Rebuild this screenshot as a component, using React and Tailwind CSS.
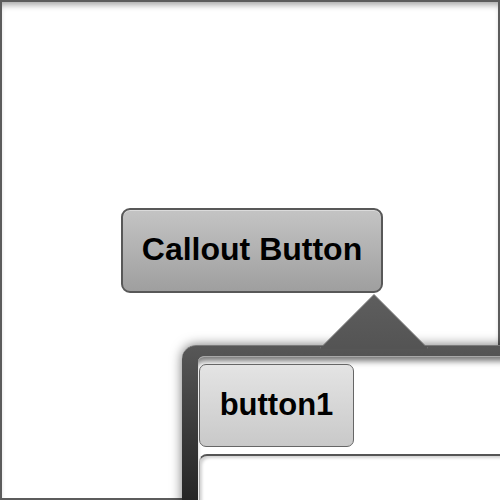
import React from 'react'

// Callout button with a popup panel hanging off its bottom-right corner
const Arrow = () => (
  <svg width="108" height="56" viewBox="0 0 108 56" className="block">
    <defs>
      <linearGradient id="arrowFill" x1="0" y1="0" x2="0" y2="1">
        <stop offset="0" stopColor="#5e5e5e" />
        <stop offset="1" stopColor="#545454" />
      </linearGradient>
    </defs>
    <path d="M0.5 55 L54 1.5 L107.5 55 Z" fill="url(#arrowFill)" stroke="#7a7a7a" strokeWidth="1" />
    <rect x="1" y="53" width="106" height="4" fill="#545454" />
  </svg>
)

export default function App() {
  return (
    <div
      className="relative w-[500px] h-[500px] overflow-hidden bg-white"
      style={{ fontFamily: '"Liberation Sans", Arial, sans-serif' }}
    >
      {/* ── Page frame ─────────────────────────────── */}
      <div className="h-full border-2 border-[#5c5c5c] shadow-[inset_0_6px_6px_-3px_rgba(0,0,0,0.35)] pl-[119px] pt-[206px]">
        <button className="w-[262px] h-[85px] pb-[3px] rounded-[9px] border-2 border-[#585858] bg-gradient-to-b from-[#c4c4c4] to-[#9f9f9f] shadow-[inset_0_1px_0_rgba(255,255,255,0.4)] flex items-center justify-center">
          <span className="text-[32px] font-bold text-black leading-none">Callout Button</span>
        </button>
      </div>

      {/* ── Callout arrow ──────────────────────────── */}
      <div className="absolute left-[320px] top-[293px] z-20">
        <Arrow />
      </div>

      {/* ── Callout panel ──────────────────────────── */}
      <div className="absolute left-[182px] top-[345px] w-[340px] h-[180px] z-10 rounded-tl-[14px] border-t border-[#7a7a7a] bg-gradient-to-b from-[#575757] to-[#1e1e1e] shadow-[0_0_12px_rgba(0,0,0,0.55)] pl-[16px] pt-[10px]">
        <div className="h-full rounded-tl-[6px] bg-white border-t border-[#a8a8a8] shadow-[inset_0_7px_6px_-3px_rgba(0,0,0,0.55)] pl-px pt-[7px] flex flex-col gap-[7px]">
          <button className="w-[155px] h-[83px] pb-[3px] shrink-0 rounded-[7px] border border-[#666] bg-gradient-to-b from-[#e4e4e4] to-[#c9c9c9] flex items-center justify-center">
            <span className="text-[31px] font-bold text-black leading-none">button1</span>
          </button>
          <div className="flex-1 rounded-tl-[8px] border-t-2 border-l border-t-[#555] border-l-[#aaa] bg-white shadow-[inset_3px_3px_3px_-1px_rgba(0,0,0,0.18)]" />
        </div>
      </div>
    </div>
  )
}
